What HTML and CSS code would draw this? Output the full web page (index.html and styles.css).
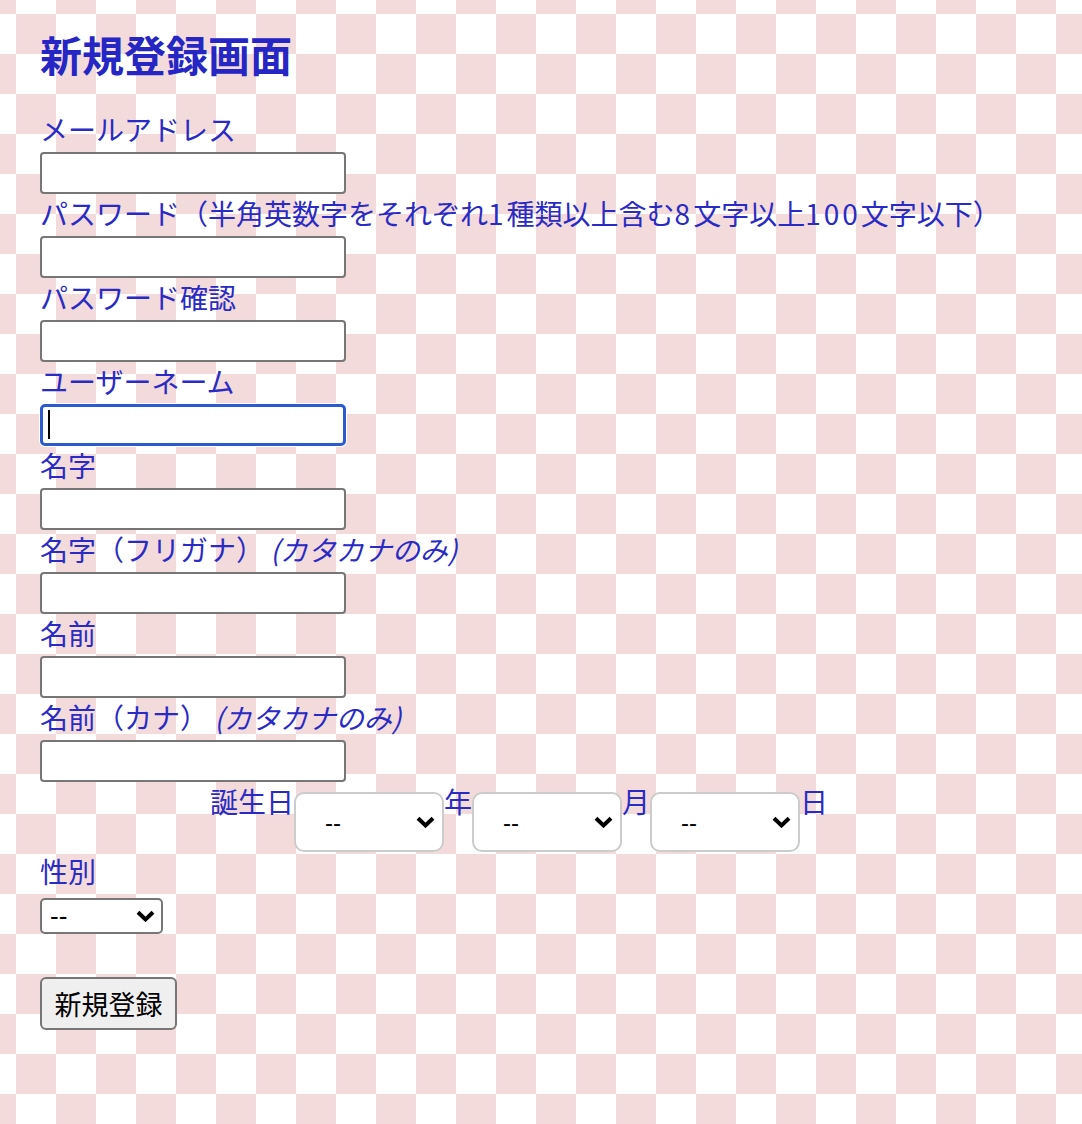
FILE: index.html
```html
<!DOCTYPE html>
<html lang="ja">
<head>
<meta charset="utf-8">
<title>新規登録画面</title>
<link rel="stylesheet" href="styles.css">
</head>
<body>
<main class="page">
  <h1 class="title">新規登録画面</h1>
  <form class="form">
    <div class="field">
      <label class="label">メールアドレス</label>
      <input class="text-input" type="text">
    </div>
    <div class="field">
      <label class="label">パスワード（半角英数字をそれぞれ<span class="num">1</span>種類以上含む<span class="num">8</span>文字以上<span class="num">100</span>文字以下）</label>
      <input class="text-input" type="password">
    </div>
    <div class="field">
      <label class="label">パスワード確認</label>
      <input class="text-input" type="password">
    </div>
    <div class="field">
      <label class="label">ユーザーネーム</label>
      <input class="text-input is-focused" type="text">
    </div>
    <div class="field">
      <label class="label">名字</label>
      <input class="text-input" type="text">
    </div>
    <div class="field">
      <label class="label">名字（フリガナ） <i class="note">(カタカナのみ)</i></label>
      <input class="text-input" type="text">
    </div>
    <div class="field">
      <label class="label">名前</label>
      <input class="text-input" type="text">
    </div>
    <div class="field">
      <label class="label">名前（カナ） <i class="note">(カタカナのみ)</i></label>
      <input class="text-input" type="text">
    </div>
    <div class="birthday">
      <span class="bd-text">誕生日</span>
      <select class="bd-select"><option>--</option></select>
      <span class="bd-text">年</span>
      <select class="bd-select"><option>--</option></select>
      <span class="bd-text">月</span>
      <select class="bd-select"><option>--</option></select>
      <span class="bd-text">日</span>
    </div>
    <div class="field">
      <label class="label">性別</label>
      <select class="gender-select"><option>--</option></select>
    </div>
    <div class="actions">
      <button class="submit" type="button">新規登録</button>
    </div>
  </form>
</main>
</body>
</html>
```

FILE: styles.css
```css
html {
  background-color: #ffffff;
  background-image: conic-gradient(transparent 25%, #f3dbdc 0 50%, transparent 0 75%, #f3dbdc 0);
  background-size: 80px 80px;
  background-position: -24px -26px;
  min-height: 100%;
}

body {
  margin: 0;
  font-family: "Noto Sans CJK JP", "Noto Sans", sans-serif;
  color: #2a2ac4;
}

.page {
  padding: 24px 40px 0;
}

.title {
  margin: 0 0 26px;
  font-size: 42px;
  line-height: 60px;
  font-weight: 700;
  color: #2626c4;
}

.form {
  display: flex;
  flex-direction: column;
  align-items: flex-start;
}

.field {
  display: flex;
  flex-direction: column;
  align-items: flex-start;
}

.label {
  display: block;
  font-size: 28px;
  line-height: 38px;
  padding-bottom: 4px;
  white-space: nowrap;
}

.num {
  letter-spacing: 3px;
}

.note {
  font-style: italic;
}

.text-input {
  display: block;
  box-sizing: border-box;
  width: 306px;
  height: 42px;
  margin: 0;
  padding: 0 8px;
  border: 2px solid #767676;
  border-radius: 4px;
  background: #ffffff;
  font-size: 24px;
  outline: none;
}

.text-input.is-focused {
  border: 3px solid #2a5ccf;
  border-radius: 5px;
  box-shadow: 0 0 0 1px #ffffff;
  background-image: linear-gradient(#000, #000);
  background-repeat: no-repeat;
  background-size: 2px 29px;
  background-position: 5px 3px;
}

.birthday {
  display: flex;
  align-items: flex-start;
  padding-left: 170px;
}

.bd-text {
  font-size: 28px;
  line-height: 38px;
}

.bd-select {
  appearance: none;
  -webkit-appearance: none;
  box-sizing: border-box;
  width: 150px;
  height: 60px;
  margin: 10px 0 0;
  padding: 0 0 0 29px;
  border: 2px solid #cccccc;
  border-radius: 10px;
  background-color: #ffffff;
  background-image: url("data:image/svg+xml,%3Csvg xmlns='http://www.w3.org/2000/svg' width='19' height='12' viewBox='0 0 19 12'%3E%3Cpath d='M2 2.2 L9.5 9.4 L17 2.2' fill='none' stroke='%23000' stroke-width='4'/%3E%3C/svg%3E");
  background-repeat: no-repeat;
  background-position: right 7px center;
  background-size: 19px 12px;
  font-family: "Liberation Sans", Arial, sans-serif;
  font-size: 24px;
  color: #000000;
}

.gender-select {
  appearance: none;
  -webkit-appearance: none;
  box-sizing: border-box;
  width: 123px;
  height: 36px;
  margin: 4px 0 0;
  padding: 0 0 0 8px;
  border: 2px solid #767676;
  border-radius: 5px;
  background-color: #ffffff;
  background-image: url("data:image/svg+xml,%3Csvg xmlns='http://www.w3.org/2000/svg' width='19' height='12' viewBox='0 0 19 12'%3E%3Cpath d='M2 2.2 L9.5 9.4 L17 2.2' fill='none' stroke='%23000' stroke-width='4'/%3E%3C/svg%3E");
  background-repeat: no-repeat;
  background-position: right 6px center;
  background-size: 19px 12px;
  font-family: "Liberation Sans", Arial, sans-serif;
  font-size: 26px;
  color: #000000;
}

.actions {
  margin-top: 43px;
}

.submit {
  box-sizing: border-box;
  width: 137px;
  height: 53px;
  margin: 0;
  padding: 0;
  border: 2px solid #767676;
  border-radius: 6px;
  background: #efefef;
  color: #000000;
  font-family: "Noto Sans CJK JP", sans-serif;
  font-size: 27px;
  line-height: 1;
}
```
